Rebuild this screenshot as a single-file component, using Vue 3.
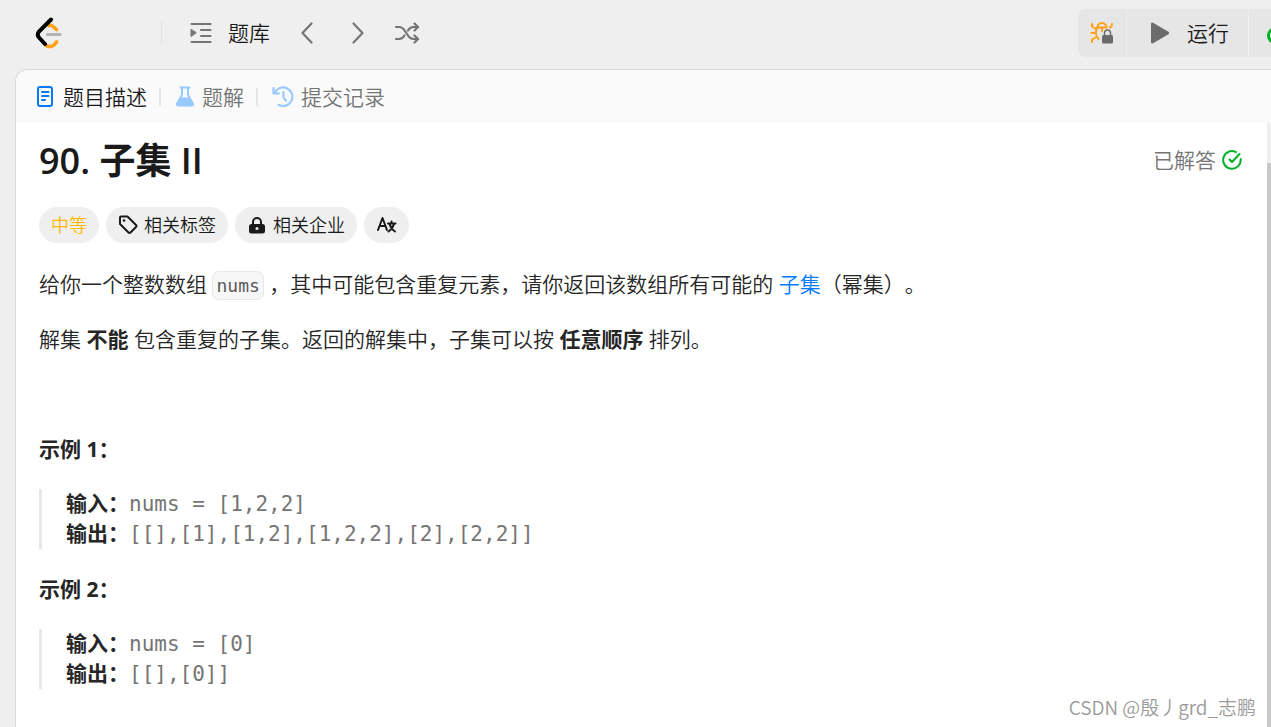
<template>
  <div class="page">
    <header class="topbar">
      <a href="#" class="logo" aria-label="LeetCode">
        <svg width="28" height="32" viewBox="0 0 28 32" fill="none" stroke-linecap="round" stroke-width="3.6">
          <path d="M14 8.500q2-.8 4 1l3.500 3" stroke="#ffa116" />
          <path d="M10 27.500q5 4 9 .5l2.500-3" stroke="#ffa116" />
          <path d="M12.500 17.500H25" stroke="#b3b3b3" stroke-width="3" />
          <path d="M16 2.500L4 14.500q-2.500 3 0 6l6 6.500" stroke="#000" stroke-width="4" />
        </svg>
      </a>
      <nav class="nav">
        <a href="#" class="nav-list">
          <svg width="22" height="22" viewBox="0 0 22 22" fill="none" stroke="#757575" stroke-width="2.2" stroke-linecap="round">
            <path d="M1.500 2h19M11 8h9.500M11 14h9.500M1.500 20h19" />
            <path d="M1 7.500v7l5-3.500z" fill="#757575" stroke-width="1" stroke-linejoin="round" />
          </svg>
          <span>题库</span>
        </a>
        <button type="button" class="icon-btn" aria-label="上一题">
          <svg width="12" height="22" viewBox="0 0 12 22" fill="none" stroke="#757575" stroke-width="2.2" stroke-linecap="round" stroke-linejoin="round">
            <path d="M10.500 1.500L1.500 11l9 9.500" />
          </svg>
        </button>
        <button type="button" class="icon-btn" aria-label="下一题">
          <svg width="12" height="22" viewBox="0 0 12 22" fill="none" stroke="#757575" stroke-width="2.2" stroke-linecap="round" stroke-linejoin="round">
            <path d="M1.500 1.500l9 9.500-9 9.500" />
          </svg>
        </button>
        <button type="button" class="icon-btn" aria-label="随机一题">
          <svg width="26" height="22" viewBox="0 0 26 22" fill="none" stroke="#757575" stroke-width="2.2" stroke-linecap="round" stroke-linejoin="round">
            <path d="M2 5h3c3 0 4.500 1.500 6 4l3 4.500c1.500 2.500 3 3.500 5.500 3.500H24" />
            <path d="M2 17h3c2.500 0 4-1 5.500-3.500M14 8.500C15.500 6 17 5 19.500 5H24" />
            <path d="M20.500 1.500L24 5l-3.500 3.500M20.500 13.500L24 17l-3.500 3.500" />
          </svg>
        </button>
      </nav>
      <div class="actions">
        <button type="button" class="debug" aria-label="调试">
          <svg width="24" height="24" viewBox="0 0 24 24" fill="none" stroke="#ffa116" stroke-width="2" stroke-linecap="round" stroke-linejoin="round">
            <path d="M7.500 6.500a4.500 4.500 0 0 1 9 0zM12 6.500V10" />
            <path d="M7 6.500C5.500 10 5.500 15 8.500 18M2 3v2.500L6 8M1.500 12H6M2 21v-2.500L6.500 16M22 3q0 2.500-2 3.500" />
            <path d="M14.500 15v-2.500a3 3.500 0 0 1 6 0V15" stroke="#6b6b6b" stroke-width="1.500" />
            <rect x="12" y="14" width="11" height="8.500" rx="1.500" fill="#6b6b6b" stroke="none" />
          </svg>
        </button>
        <button type="button" class="run">
          <svg width="20" height="22" viewBox="0 0 20 22" fill="#6b6b6b">
            <path d="M1 2Q1 0 3 .8L18.500 9.700Q20 11 18.500 12.300L3 21.200Q1 22 1 20z" />
          </svg>
          <span>运行</span>
        </button>
        <button type="button" class="submit" aria-label="提交">
          <svg width="21" height="21" viewBox="0 0 21 21" fill="none" stroke="#02b128" stroke-width="3" stroke-linecap="round">
            <path d="M8 6a7 7 0 1 0 5 0" />
          </svg>
        </button>
      </div>
    </header>

    <main class="panel">
      <nav class="tabs">
        <a href="#" class="tab active">
          <svg width="18" height="22" viewBox="0 0 18 22" fill="none" stroke="#007aff" stroke-width="2" stroke-linecap="round">
            <rect x="2" y="1" width="14" height="19" rx="2" />
            <path d="M6 6h6.500M6 10h6.500M6 14h3" />
          </svg>
          <span>题目描述</span>
        </a>
        <a href="#" class="tab">
          <svg width="20" height="22" viewBox="0 0 20 22" fill="none" stroke="#99caff" stroke-width="2" stroke-linecap="round" stroke-linejoin="round">
            <path d="M5.500 1.500h9M7 1.500v7.500L2 18M13 1.500v7.500l5 9" />
            <path d="M5 12h10l3.500 6q.5 2-1.500 2H3q-2 0-1.500-2z" fill="#99caff" stroke-width="1" />
          </svg>
          <span>题解</span>
        </a>
        <a href="#" class="tab">
          <svg width="22" height="22" viewBox="0 0 22 22" fill="none" stroke="#99caff" stroke-width="2.2" stroke-linecap="round" stroke-linejoin="round">
            <path d="M1.500 2v5.500H7M2.500 7A9.300 9.300 0 1 1 6.500 18.800M11.500 6v5.500l2.500 3" />
          </svg>
          <span>提交记录</span>
        </a>
      </nav>

      <div class="body">
        <article class="content">
          <div class="heading">
            <h1>90. <b>子集</b> II</h1>
            <div class="solved">
              <span>已解答</span>
              <svg width="20" height="20" viewBox="0 0 20 20" fill="none" stroke="#02b128" stroke-width="2" stroke-linecap="round" stroke-linejoin="round">
                <path d="M14 2.100A8.800 8.800 0 1 0 18.700 9M7.500 9.500l2.500 2.500 7.500-8" />
              </svg>
            </div>
          </div>

          <div class="tags">
            <span class="tag medium">中等</span>
            <button type="button" class="tag">
              <svg width="20" height="20" viewBox="0 0 20 20" fill="none" stroke="#1a1a1a" stroke-width="2" stroke-linejoin="round">
                <path d="M2 2.500Q2 1.500 3 1.500h6.500l8.500 8.500q1 1 0 2l-5.500 5.500q-1 1-2 0L2 9z" />
                <circle cx="6" cy="5.500" r="1.300" fill="#1a1a1a" stroke="none" />
              </svg>
              <span>相关标签</span>
            </button>
            <button type="button" class="tag">
              <svg width="20" height="20" viewBox="0 0 20 20" fill="none">
                <path d="M6 10V7a4 4 0 0 1 8 0v3" stroke="#1a1a1a" stroke-width="2" />
                <path d="M4.500 9h11Q18 9 18 11.500v4.500q0 2.500-2.500 2.500h-11Q2 18.500 2 16v-4.500Q2 9 4.500 9z" fill="#1a1a1a" />
                <circle cx="10" cy="13.500" r="1.500" fill="#efefef" />
              </svg>
              <span>相关企业</span>
            </button>
            <button type="button" class="tag" aria-label="切换语言">
              <svg width="21" height="20" viewBox="0 0 21 20" fill="none" stroke="#1a1a1a" stroke-width="2" stroke-linecap="round" stroke-linejoin="round">
                <path d="M2 15L6.500 3 11 15M3.500 11h6" />
                <path d="M12 8.500h7.500M15.500 6.500v2M18 9q-1.500 5-5.500 7.500M13.500 9q1.500 5 5.500 7.500" />
              </svg>
            </button>
          </div>

          <p>给你一个整数数组 <code>nums</code> ，其中可能包含重复元素，请你返回该数组所有可能的 <a href="#">子集</a>（幂集）。</p>
          <p>解集 <strong>不能</strong> 包含重复的子集。返回的解集中，子集可以按 <strong>任意顺序</strong> 排列。</p>
          <p>&nbsp;</p>

          <template v-for="(example, index) in examples" :key="index">
            <p><strong>示例 {{ index + 1 }}：</strong></p>
            <pre><strong>输入：</strong>{{ example.input }}
<strong>输出：</strong>{{ example.output }}</pre>
          </template>
        </article>
        <div class="scrollbar"><div class="thumb"></div></div>
      </div>
    </main>

    <div class="watermark">CSDN @殷丿grd_志鹏</div>
  </div>
</template>

<script setup>
const examples = [
  { input: 'nums = [1,2,2]', output: '[[],[1],[1,2],[1,2,2],[2],[2,2]]' },
  { input: 'nums = [0]', output: '[[],[0]]' }
]
</script>

<style>
body {
  margin: 0;
  background: #efefef;
}
</style>

<style scoped>
.page {
  position: relative;
  display: flex;
  flex-direction: column;
  height: 100vh;
  overflow: hidden;
  font-family: "Open Sans", "Noto Sans CJK SC", sans-serif;
  font-size: 21px;
  font-weight: 350;
  line-height: 34px;
  text-spacing-trim: space-all;
  color: #262626;
}

a {
  color: #007aff;
  text-decoration: none;
}

button {
  border: none;
  padding: 0;
  background: none;
  font: inherit;
  color: inherit;
  cursor: pointer;
}

svg {
  display: block;
  flex: none;
}

.topbar {
  display: flex;
  align-items: center;
  height: 66px;
  padding-bottom: 3px;
  flex: none;
}

.logo {
  padding: 0 98px 0 35px;
}

.nav {
  display: flex;
  align-items: center;
  border-left: 1px solid #e2e2e2;
  height: 24px;
}

.nav-list {
  display: flex;
  align-items: center;
  gap: 16px;
  margin: 0 31px 0 28px;
  color: #1a1a1a;
}

.icon-btn {
  margin-right: 39px;
}

.icon-btn + .icon-btn {
  margin-right: 30px;
}

.actions {
  display: flex;
  gap: 1px;
  margin-left: auto;
}

.actions button {
  display: flex;
  align-items: center;
  height: 48px;
  background: #e6e6e6;
  color: #1a1a1a;
}

.actions .debug {
  width: 48px;
  justify-content: center;
  border-radius: 8px 0 0 8px;
}

.actions .run {
  width: 121px;
  gap: 17px;
  padding-left: 23px;
}

.actions .submit {
  width: 22px;
  padding-left: 16px;
  overflow: hidden;
}

.panel {
  display: flex;
  flex-direction: column;
  flex: 1;
  min-height: 0;
  margin-left: 15px;
  border: 1px solid #d9d9d9;
  border-width: 1px 0 0 1px;
  border-radius: 13px 0 0 0;
  background: #fff;
  overflow: hidden;
}

.tabs {
  display: flex;
  align-items: center;
  height: 53px;
  padding-left: 20px;
  background: #fafafa;
  flex: none;
}

.tab {
  display: flex;
  align-items: center;
  gap: 7px;
  color: #757575;
}

.tab + .tab::before {
  content: "";
  width: 2px;
  height: 18px;
  margin: 0 7px 0 12px;
  background: #e5e5e5;
}

.tab.active {
  gap: 9px;
  color: #1a1a1a;
}

.body {
  display: flex;
  flex: 1;
  min-height: 0;
}

.content {
  flex: 1;
  padding: 14px 25px 0 23px;
  overflow: hidden;
}

.scrollbar {
  width: 4px;
  padding-top: 40px;
  background: #efefef;
}

.thumb {
  height: 100%;
  background: #c8c8c8;
}

.heading {
  display: flex;
  justify-content: space-between;
  align-items: center;
  margin-bottom: 22px;
}

h1 {
  margin: 0;
  font-size: 36px;
  line-height: 48px;
  font-weight: 600;
  color: #1a1a1a;
}

h1 b {
  font-weight: 700;
}

.solved {
  display: flex;
  align-items: center;
  gap: 6px;
  padding-bottom: 2px;
  color: #757575;
}

.tags {
  display: flex;
  gap: 7px;
  margin-bottom: 24px;
}

.tag {
  display: flex;
  align-items: center;
  gap: 6px;
  height: 36px;
  padding: 0 12px;
  border-radius: 18px;
  background: #efefef;
  font-size: 18px;
  color: #1a1a1a;
}

.tag.medium {
  color: #ffb800;
}

p {
  margin: 0 0 21px;
}

code {
  padding: 3px;
  border: 1px solid #e8e8e8;
  border-radius: 7px;
  background: #f7f7f7;
  font-family: "DejaVu Sans Mono", monospace;
  font-size: 18px;
  line-height: 20px;
  color: #595959;
}

strong {
  font-weight: 700;
}

pre {
  margin: 23px 0;
  padding-left: 24px;
  border-left: 3px solid #e8e8e8;
  font-family: "DejaVu Sans Mono", "Noto Sans CJK SC", monospace;
  font-size: 21px;
  line-height: 30px;
  color: #757575;
}

pre strong {
  color: #262626;
}

.watermark {
  position: absolute;
  right: 15px;
  bottom: 3px;
  font-family: "Noto Sans CJK SC", sans-serif;
  font-size: 19px;
  line-height: 34px;
  color: #9a9a9a;
}
</style>
